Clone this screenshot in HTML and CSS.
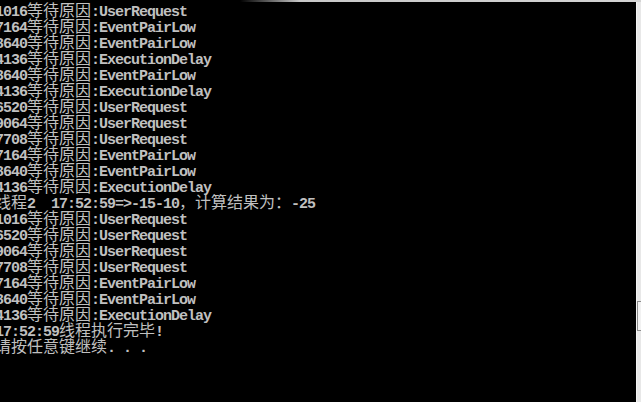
FILE: index.html
```html
<!DOCTYPE html>
<html lang="zh-CN">
<head>
<meta charset="utf-8">
<title>Console</title>
<link rel="stylesheet" href="styles.css">
</head>
<body>
<div class="window">
  <div class="topedge"></div>
  <div class="frame">
    <div class="console">
      <div class="ln">1016<span class="h">等待原因</span>:UserRequest</div>
      <div class="ln">7164<span class="h">等待原因</span>:EventPairLow</div>
      <div class="ln">8640<span class="h">等待原因</span>:EventPairLow</div>
      <div class="ln">4136<span class="h">等待原因</span>:ExecutionDelay</div>
      <div class="ln">8640<span class="h">等待原因</span>:EventPairLow</div>
      <div class="ln">4136<span class="h">等待原因</span>:ExecutionDelay</div>
      <div class="ln">6520<span class="h">等待原因</span>:UserRequest</div>
      <div class="ln">9064<span class="h">等待原因</span>:UserRequest</div>
      <div class="ln">7708<span class="h">等待原因</span>:UserRequest</div>
      <div class="ln">7164<span class="h">等待原因</span>:EventPairLow</div>
      <div class="ln">8640<span class="h">等待原因</span>:EventPairLow</div>
      <div class="ln">4136<span class="h">等待原因</span>:ExecutionDelay</div>
      <div class="ln"><span class="h">线程</span>2  17:52:59=&gt;-15-10<span class="h">，计算结果为：</span>-25</div>
      <div class="ln">1016<span class="h">等待原因</span>:UserRequest</div>
      <div class="ln">6520<span class="h">等待原因</span>:UserRequest</div>
      <div class="ln">9064<span class="h">等待原因</span>:UserRequest</div>
      <div class="ln">7708<span class="h">等待原因</span>:UserRequest</div>
      <div class="ln">7164<span class="h">等待原因</span>:EventPairLow</div>
      <div class="ln">8640<span class="h">等待原因</span>:EventPairLow</div>
      <div class="ln">4136<span class="h">等待原因</span>:ExecutionDelay</div>
      <div class="ln">17:52:59<span class="h">线程执行完毕</span>!</div>
      <div class="ln"><span class="h">请按任意键继续</span>. . .</div>
    </div>
    <div class="scrollbar">
      <div class="thumb"></div>
    </div>
  </div>
</div>
</body>
</html>
```

FILE: styles.css
```css
html, body {
  margin: 0;
  padding: 0;
  background: #000;
  width: 641px;
  height: 402px;
  overflow: hidden;
}

.window {
  position: relative;
  width: 641px;
  height: 402px;
  display: flex;
  flex-direction: column;
}

.topedge {
  position: absolute;
  left: 240px;
  right: 0;
  top: 0;
  height: 2px;
  background: linear-gradient(to right, rgba(200,200,200,0), #c8c8c8 60px, #d4d4d4);
}

.frame {
  flex: 1;
  display: flex;
  flex-direction: row;
  min-height: 0;
}

.console {
  flex: 1;
  overflow: hidden;
  padding-top: 1px;
  margin-left: -5px;
  color: #c0c0c0;
  font-family: "Liberation Mono", "DejaVu Sans Mono", monospace;
  font-weight: bold;
  font-size: 15px;
  letter-spacing: -1px;
}

.ln {
  height: 16px;
  line-height: 16px;
  white-space: pre;
}

.h {
  font-family: "Noto Sans CJK SC", "Noto Sans CJK JP", sans-serif;
  font-weight: normal;
  font-size: 16px;
  letter-spacing: 0;
  line-height: 16px;
}

.scrollbar {
  width: 5px;
  background: #e8e8e8;
  border-left: 1px solid #f4f4f4;
  padding-top: 301px;
  box-sizing: border-box;
}

.thumb {
  height: 30px;
  border: 1px solid #8c8c8c;
  border-right: none;
  background: #f2f2f2;
  box-sizing: border-box;
}
```
